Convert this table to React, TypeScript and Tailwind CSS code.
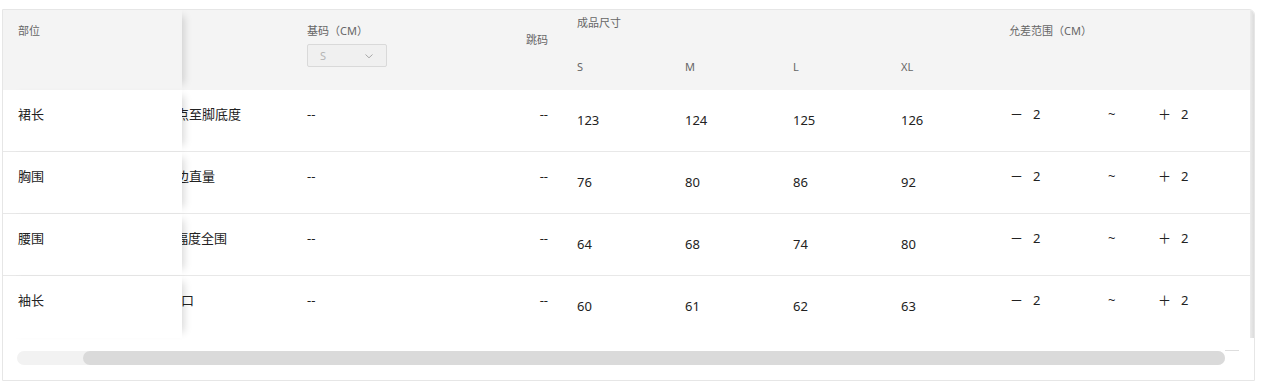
import React from "react";

const FONT = { fontFamily: '"Noto Sans", "Noto Sans CJK SC", sans-serif' };

type Row = {
  name: string;
  desc: string;
  descShift: string;
  sizes: string[];
};

const rows: Row[] = [
  { name: "裙长", desc: "点至脚底度", descShift: "ml-[-6px]", sizes: ["123", "124", "125", "126"] },
  { name: "胸围", desc: "边直量", descShift: "ml-[-6px]", sizes: ["76", "80", "86", "92"] },
  { name: "腰围", desc: "幅度全围", descShift: "ml-[-7px]", sizes: ["64", "68", "74", "80"] },
  { name: "袖长", desc: "口", descShift: "ml-[-1px]", sizes: ["60", "61", "62", "63"] },
];

function Chevron() {
  return (
    <svg width="10" height="10" viewBox="0 0 10 10" fill="none">
      <path d="M1.5 3.5 L5 6.8 L8.5 3.5" stroke="#a8a8a8" strokeWidth="1" />
    </svg>
  );
}

export default function App() {
  return (
    <div className="w-[1267px] h-[392px] bg-white pt-[9px] pl-[2px] text-[#222]" style={FONT}>
      <div className="w-[1253px] h-[372px] border border-[#e6e6e6] rounded-tr-[6px] overflow-hidden flex flex-col">
        <div className="flex">
          <div className="w-[1247px] flex flex-col">
            {/* header */}
            <div className="flex h-[80px] bg-[#f4f4f4] text-[11px] leading-[16px] text-[#666]">
              <div className="w-[179px] pl-[15px] pt-[13px] bg-[#f4f4f4] relative z-10 shadow-[8px_0_8px_-6px_rgba(0,0,0,0.16)]">
                部位
              </div>
              <div className="w-[109px]" />
              <div className="w-[160px] pl-[16px] pt-[13px]">
                <div>基码（CM）</div>
                <div className="mt-[5px] w-[80px] h-[23px] border border-[#d9d9d9] rounded-[2px] bg-[#f0f0f0] flex items-center justify-between pl-[12px] pr-[12px] text-[#b5b5b5]">
                  <span>S</span>
                  <Chevron />
                </div>
              </div>
              <div className="w-[110px] pt-[22px] pr-[13px] text-right">跳码</div>
              <div className="w-[432px] pt-[5px] flex flex-col">
                <div className="pl-[16px]">成品尺寸</div>
                <div className="flex mt-[28px]">
                  {["S", "M", "L", "XL"].map((s) => (
                    <div key={s} className="w-[108px] pl-[16px]">
                      {s}
                    </div>
                  ))}
                </div>
              </div>
              <div className="flex-1 pl-[16px] pt-[13px]">允差范围（CM）</div>
            </div>

            {/* body rows */}
            {rows.map((r, i) => (
              <div
                key={r.name}
                className={`flex h-[62px] text-[13px] leading-[20px] ${i < rows.length - 1 ? "border-b border-[#e8e8e8]" : ""}`}
              >
                <div className="w-[179px] pl-[15px] pt-[14px] bg-white relative z-10 shadow-[8px_0_8px_-6px_rgba(0,0,0,0.16)]">
                  {r.name}
                </div>
                <div className="w-[109px] overflow-hidden pt-[14px]">
                  <div className={`${r.descShift} whitespace-nowrap`}>{r.desc}</div>
                </div>
                <div className="w-[160px] pl-[16px] pt-[14px]">--</div>
                <div className="w-[110px] pr-[13px] pt-[14px] text-right">--</div>
                {r.sizes.map((s, j) => (
                  <div key={j} className="w-[108px] pl-[16px] pt-[20px]">
                    {s}
                  </div>
                ))}
                <div className="flex-1 pl-[17px] pt-[14px] flex items-start">
                  <div className="w-[98px] flex">
                    <span className="w-[23px]">－</span>
                    <span>2</span>
                  </div>
                  <div className="w-[50px]">~</div>
                  <div className="flex">
                    <span className="w-[23px]">＋</span>
                    <span>2</span>
                  </div>
                </div>
              </div>
            ))}
          </div>
          <div className="w-[4px] bg-gradient-to-r from-[#ececec] to-[#dcdcdc] rounded-tr-[6px]" />
        </div>

        {/* horizontal scrollbar */}
        <div className="flex-1 flex items-start pt-[13px] pl-[14px]">
          <div className="w-[1208px] h-[14px] rounded-full bg-[#f2f2f2] flex">
            <div className="ml-[66px] flex-1 rounded-full bg-[#dadada]" />
          </div>
          <div className="w-[14px] h-px bg-[#dedede] mt-[-1px]" />
        </div>
      </div>
    </div>
  );
}
